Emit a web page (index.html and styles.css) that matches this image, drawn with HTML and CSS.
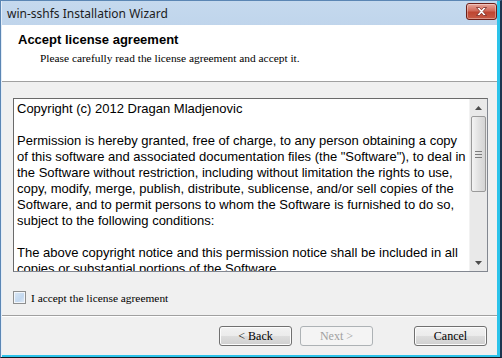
FILE: index.html
```html
<!DOCTYPE html>
<html lang="en">
<head>
    <meta charset="UTF-8">
    <title>win-sshfs Installation Wizard</title>
    <link rel="stylesheet" href="styles.css">
</head>
<body>
    <div class="window">
        <div class="titlebar">
            <span class="title">win-sshfs Installation Wizard</span>
            <button class="close" type="button" aria-label="Close">
                <svg width="13" height="9" viewBox="0 0 13 9">
                    <path d="M1.5 0.5 L4.5 0.5 L6.5 2.8 L8.5 0.5 L11.5 0.5 L8 4.5 L11.5 8.5 L8.5 8.5 L6.5 6.2 L4.5 8.5 L1.5 8.5 L5 4.5 Z" fill="#fff" stroke="#7a2a22" stroke-width="0.8"/>
                </svg>
            </button>
        </div>
        <div class="client">
            <div class="header">
                <h1>Accept license agreement</h1>
                <p>Please carefully read the license agreement and accept it.</p>
            </div>
            <div class="content">
                <div class="textbox">
                    <div class="license">
                        <p>Copyright (c) 2012 Dragan Mladjenovic</p>
                        <p>Permission is hereby granted, free of charge, to any person obtaining a copy of this software and associated documentation files (the "Software"), to deal in the Software without restriction, including without limitation the rights to use, copy, modify, merge, publish, distribute, sublicense, and/or sell copies of the Software, and to permit persons to whom the Software is furnished to do so, subject to the following conditions:</p>
                        <p>The above copyright notice and this permission notice shall be included in all copies or substantial portions of the Software.</p>
                    </div>
                    <div class="scrollbar">
                        <div class="arrow">
                            <svg width="7" height="4" viewBox="0 0 7 4"><path d="M3.5 0 L7 4 L0 4 Z" fill="#4d4d4d"/></svg>
                        </div>
                        <div class="track">
                            <div class="thumb">
                                <svg width="7" height="7" viewBox="0 0 7 7">
                                    <path d="M0 0.5 H7 M0 3.5 H7 M0 6.5 H7" stroke="#7d7d7d" stroke-width="1"/>
                                </svg>
                            </div>
                        </div>
                        <div class="arrow">
                            <svg width="7" height="4" viewBox="0 0 7 4"><path d="M0 0 L7 0 L3.5 4 Z" fill="#4d4d4d"/></svg>
                        </div>
                    </div>
                </div>
                <label class="accept">
                    <span class="check"></span>
                    I accept the license agreement
                </label>
            </div>
            <div class="footer">
                <button class="btn" type="button">&lt; Back</button>
                <button class="btn" type="button" disabled>Next &gt;</button>
                <button class="btn cancel" type="button">Cancel</button>
            </div>
        </div>
    </div>
</body>
</html>
```

FILE: styles.css
```css
html, body {
    margin: 0;
    padding: 0;
}
body {
    width: 502px;
    height: 358px;
    overflow: hidden;
    background: #000;
}
.window {
    width: 502px;
    height: 358px;
    box-sizing: border-box;
    display: flex;
    flex-direction: column;
    background: linear-gradient(#c5d9ee, #bcd2ea 40px, #b9cfe8);
    border-left: 1px solid #5b86b4;
    border-right: 2px solid #1d3550;
    border-bottom: 1px solid #101820;
    border-top: 1px solid #5b86b4;
    box-shadow: inset 1px 0 0 #e3edf8, inset -3px 0 0 #2cc3ea, inset 0 -2px 0 #2cc3ea;
}
.titlebar {
    height: 24px;
    display: flex;
    align-items: center;
    justify-content: space-between;
    padding: 0 3px 0 6px;
}
.title {
    font-family: "Noto Sans", sans-serif;
    font-size: 12px;
    color: #1c1c1c;
    margin-top: 1px;
}
.close {
    width: 31px;
    height: 17px;
    margin-top: -4px;
    padding: 0;
    border: 1px solid #6d1f18;
    border-radius: 3px;
    background: linear-gradient(#e8a79c, #d06a5a 45%, #be4632 55%, #c75a45);
    box-shadow: inset 0 0 0 1px rgba(255, 255, 255, 0.35);
    display: flex;
    align-items: center;
    justify-content: center;
}
.client {
    flex: 1;
    margin: 0 3px 2px 1px;
    background: #f0f0f0;
    display: flex;
    flex-direction: column;
}
.header {
    background: #fff;
    border-bottom: 1px solid #a0a0a0;
    box-sizing: border-box;
    padding: 7px 0 0 16px;
    height: 57px;
}
.header h1 {
    margin: 0;
    font-family: "Liberation Sans", Arial, sans-serif;
    font-size: 13px;
    font-weight: bold;
    color: #000;
    line-height: 16px;
}
.header p {
    margin: 3px 0 0 22px;
    font-family: "Liberation Serif", serif;
    font-size: 11.4px;
    line-height: 14px;
    color: #000;
}
.content {
    height: 234px;
    box-sizing: border-box;
    padding: 16px 9px 0 11px;
    border-bottom: 1px solid #a0a0a0;
    box-shadow: 0 1px 0 #fff;
}
.textbox {
    height: 174px;
    box-sizing: border-box;
    border: 1px solid #828790;
    border-top-color: #6a6a6a;
    border-left-color: #6a6a6a;
    background: #fff;
    display: flex;
    overflow: hidden;
}
.license {
    flex: 1;
    padding: 2px 0 0 3px;
    font-family: "Liberation Sans", Arial, sans-serif;
    font-size: 13px;
    line-height: 16px;
    color: #000;
    overflow: hidden;
}
.license p {
    margin: 0 0 16px 0;
}
.scrollbar {
    width: 17px;
    display: flex;
    flex-direction: column;
    background: #e9e9e9;
    border-left: 1px solid #f2f2f2;
}
.arrow {
    height: 17px;
    display: flex;
    align-items: center;
    justify-content: center;
}
.track {
    flex: 1;
}
.thumb {
    margin: 0 1px;
    height: 76px;
    box-sizing: border-box;
    border: 1px solid #9a9a9a;
    border-radius: 2px;
    background: linear-gradient(to right, #f4f4f4, #e2e2e2 50%, #d4d4d4);
    display: flex;
    align-items: center;
    justify-content: center;
}
.accept {
    display: flex;
    align-items: center;
    margin-top: 19px;
    font-family: "Liberation Serif", serif;
    font-size: 11.4px;
    color: #000;
}
.check {
    width: 11px;
    height: 11px;
    border: 1px solid #8e8f8f;
    background: linear-gradient(135deg, #dbe8f5, #c3d8ef 60%, #e6eef7);
    box-shadow: inset 0 0 0 1px #f2f6fb;
    margin-right: 5px;
}
.footer {
    flex: 1;
    display: flex;
    align-items: flex-start;
    padding: 10px 10px 0 0;
    justify-content: flex-end;
}
.btn {
    width: 73px;
    height: 20px;
    padding: 0;
    font-family: "Liberation Serif", serif;
    font-size: 12px;
    color: #000;
    border: 1px solid #707070;
    border-radius: 3px;
    background: linear-gradient(#f2f2f2, #ebebeb 50%, #dddddd 51%, #cfcfcf);
    box-shadow: inset 0 0 0 1px #fcfcfc;
}
.btn + .btn {
    margin-left: 8px;
}
.btn:disabled {
    color: #a0a0a0;
    border-color: #adb2b5;
    background: #f4f4f4;
    box-shadow: none;
}
.btn.cancel {
    margin-left: 41px;
}
```
